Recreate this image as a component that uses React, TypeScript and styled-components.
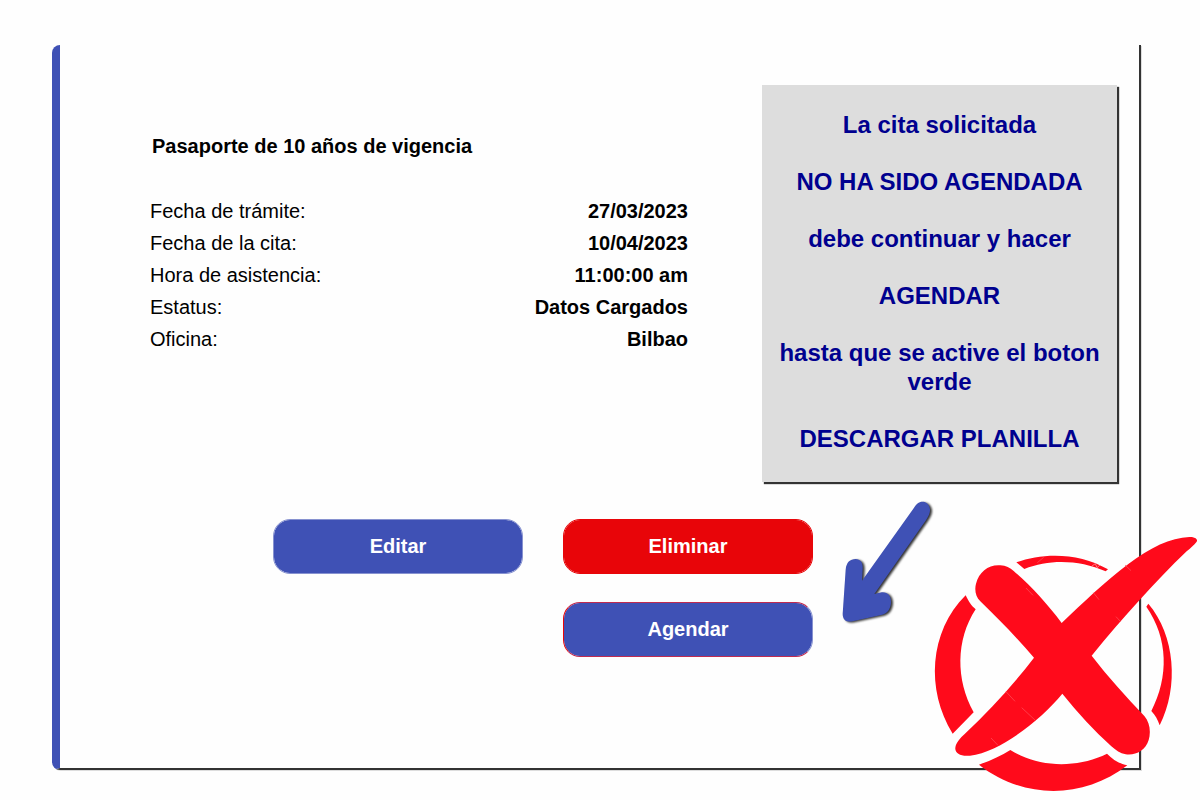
import React from "react";
import styled, { createGlobalStyle } from "styled-components";

const GlobalStyle = createGlobalStyle`
  * { box-sizing: border-box; }
  body {
    margin: 0;
    background: #fefefe;
    color: #000;
    font-family: "Liberation Sans", Arial, sans-serif;
    font-size: 20px;
  }
`;

const Page = styled.main`
  position: relative;
  display: flex;
  min-height: 100vh;
  padding: 45px 59px 30px 52px;
`;

const Card = styled.section`
  flex: 1;
  padding: 40px 22px 40px 90px;
  border-left: 8px solid #3f51b5;
  border-right: 2px solid #333;
  border-bottom: 2px solid #333;
  border-radius: 8px 0 0 8px;
  box-shadow: 1px 1px 0 #ddd;
`;

const Summary = styled.div`
  display: flex;
  align-items: flex-start;
  gap: 74px;
`;

const Details = styled.div`
  flex: 1;
  padding-top: 48px;
`;

const Title = styled.h1`
  margin: 0 0 36px 2px;
  font-size: 20px;
  line-height: 26px;
`;

const Fields = styled.dl`
  margin: 0;
`;

const Field = styled.div`
  display: flex;
  justify-content: space-between;
  line-height: 32px;
`;

const Label = styled.dt``;

const Value = styled.dd`
  margin: 0;
  font-weight: bold;
`;

const Notice = styled.aside`
  display: flex;
  flex-direction: column;
  gap: 28px;
  flex: 0 0 355px;
  padding: 25px 12px 29px;
  background: #ddd;
  box-shadow: 2px 2px 1px #333;
  color: #00008f;
  font-size: 24px;
  font-weight: bold;
  line-height: 29px;
  text-align: center;
`;

const NoticeLine = styled.p`
  margin: 0;
`;

const Actions = styled.div`
  display: flex;
  align-items: flex-start;
  gap: 27px;
  margin: 17px 0 0 123px;
`;

const Buttons = styled.div`
  display: grid;
  grid-template-columns: 250px 250px;
  gap: 28px 40px;
  padding-top: 20px;
`;

const Button = styled.button<{ $tone: "blue" | "red" | "outlined" }>`
  height: 55px;
  padding: 0;
  border: 1px solid
    ${({ $tone }) => ($tone === "blue" ? "#8792d0" : $tone === "red" ? "#e80509" : "#c02a50")};
  border-left-color: ${({ $tone }) => ($tone === "blue" ? "#8792d0" : "#e80509")};
  border-right-color: ${({ $tone }) => ($tone === "red" ? "#e80509" : "#8792d0")};
  border-radius: 17px;
  background: ${({ $tone }) => ($tone === "red" ? "#e80509" : "#3f51b5")};
  background-clip: padding-box;
  color: #fff;
  font: bold 20px "Liberation Sans", Arial, sans-serif;
  cursor: pointer;
`;

const LastButton = styled(Button)`
  grid-column: 2;
`;

const ArrowDrawing = styled.svg`
  flex: none;
  width: 100px;
  height: 130px;
  filter: drop-shadow(2px 1px 1px #333);
`;

const CrossStamp = styled.svg`
  position: absolute;
  right: 0;
  bottom: 0;
  width: 280px;
  height: 270px;
  pointer-events: none;
`;

const fields = [
  ["Fecha de trámite:", "27/03/2023"],
  ["Fecha de la cita:", "10/04/2023"],
  ["Hora de asistencia:", "11:00:00 am"],
  ["Estatus:", "Datos Cargados"],
  ["Oficina:", "Bilbao"],
];

const notice = [
  "La cita solicitada",
  "NO HA SIDO AGENDADA",
  "debe continuar y hacer",
  "AGENDAR",
  "hasta que se active el boton verde",
  "DESCARGAR PLANILLA",
];

function Arrow() {
  return (
    <ArrowDrawing viewBox="30 30 300 390" aria-hidden="true">
      <path
        fill="#3f51b5"
        d="M250 59C260 43 270 35 284 39C299 45 304 61 297 77C292 88 287 95 280 105L133 315L155 310C172 308 183 320 183 338C183 357 173 373 157 377L68 397C50 400 38 394 38 374L47 242C49 220 60 210 77 210C92 211 99 220 98 240L96 275Z"
      />
    </ArrowDrawing>
  );
}

function Cross() {
  return (
    <CrossStamp viewBox="0 0 840 810" aria-hidden="true">
      <g fill="#ff0a1b">
        <path d="M425 279C490 217 555 155 625 102C690 53 752 23 808 21C824 20 835 28 830 35C822 46 812 53 800 64C705 155 610 262 515 377C563 440 617 498 673 558C690 577 693 607 686 630C677 661 645 678 617 673C600 670 588 661 574 649C522 602 474 549 427 491C365 566 245 665 150 677C122 680 104 670 106 653C108 638 121 624 134 612C210 540 282 462 342 383C291 323 237 269 181 214C167 200 163 180 168 161C177 125 207 103 241 106C258 107 270 113 281 123C333 168 382 221 425 279Z" />
        <path d="M137 196C146 215 154 227 167 238C107 330 107 450 161 547L98 611C17 480 27 305 137 196Z" />
        <path d="M289 97C370 67 480 68 564 118L557 124C480 90 390 86 313 117Z" />
        <path d="M685 221L679 230C745 325 747 440 694 543C706 555 713 569 719 586C778 470 765 315 685 221Z" />
        <path d="M177 704C213 691 243 678 271 660C355 713 470 716 561 671C579 689 599 702 622 706C490 808 310 809 177 704Z" />
      </g>
      <path
        fill="none"
        stroke="#ff5560"
        strokeWidth="2"
        d="M258 485L285 514M305 533L347 572M520 188L537 209M588 260L602 275M318 174L339 196M213 624L234 646M352 98L371 82M615 105L633 122"
      />
      <path d="M516 108L526 101L531 113L540 105" fill="none" stroke="#ffb0b4" strokeWidth="2" />
    </CrossStamp>
  );
}

export default function App() {
  return (
    <>
      <GlobalStyle />
      <Page>
        <Card>
          <Summary>
            <Details>
              <Title>Pasaporte de 10 años de vigencia</Title>
              <Fields>
                {fields.map(([label, value]) => (
                  <Field key={label}>
                    <Label>{label}</Label>
                    <Value>{value}</Value>
                  </Field>
                ))}
              </Fields>
            </Details>
            <Notice>
              {notice.map((line) => (
                <NoticeLine key={line}>{line}</NoticeLine>
              ))}
            </Notice>
          </Summary>
          <Actions>
            <Buttons>
              <Button type="button" $tone="blue">Editar</Button>
              <Button type="button" $tone="red">Eliminar</Button>
              <LastButton type="button" $tone="outlined">Agendar</LastButton>
            </Buttons>
            <Arrow />
          </Actions>
        </Card>
        <Cross />
      </Page>
    </>
  );
}
